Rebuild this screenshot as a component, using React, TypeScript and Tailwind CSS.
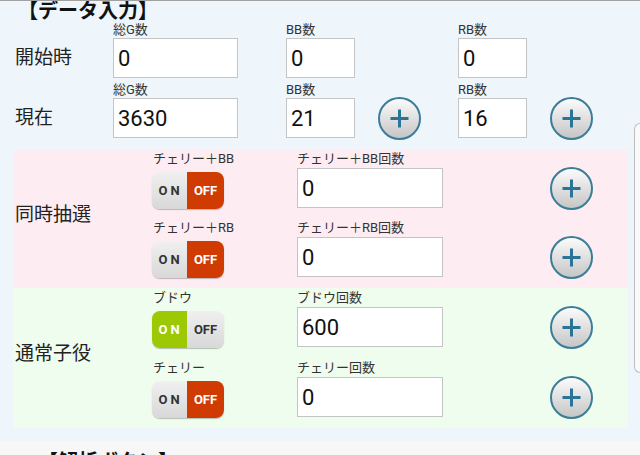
import React from "react";

const Plus = () => (
  <div className="flex h-[43px] w-[43px] items-center justify-center rounded-full border-2 border-[#3b7d98] bg-gradient-to-b from-[#fbfbfb] to-[#c6c6c6]">
    <svg width="19" height="19" viewBox="0 0 19 19">
      <path d="M9.5 0.5v18M0.5 9.5h18" stroke="#2a7597" strokeWidth="3" />
    </svg>
  </div>
);

const Field = ({ label, value, w }: { label: string; value: string; w: string }) => (
  <div className={`flex flex-col ${w}`}>
    <div className="h-[16px] text-[13px] leading-[16px] text-[#333]">{label}</div>
    <div className="flex h-[40px] items-center border border-[#c4c4c4] bg-white pl-[4px] text-[22px] text-[#111]">
      {value}
    </div>
  </div>
);

const Toggle = ({ on }: { on: boolean }) => (
  <div className="mt-[4px] flex h-[37px] w-[72px] overflow-hidden rounded-[8px] shadow-[0_1px_1px_rgba(0,0,0,0.25)]">
    <div
      className={`flex w-[35px] items-center justify-center pl-[2px] text-[13px] font-bold tracking-[3px] ${
        on ? "bg-[#9cc903] text-white" : "bg-gradient-to-b from-[#f0f0f0] to-[#d8d8d8] text-[#333]"
      }`}
    >
      ON
    </div>
    <div
      className={`flex w-[37px] items-center justify-center text-[13px] font-bold ${
        on ? "bg-gradient-to-b from-[#f0f0f0] to-[#d8d8d8] text-[#333]" : "bg-[#cf3b00] text-white"
      }`}
    >
      OFF
    </div>
  </div>
);

const SubRow = ({ tl, il, value, on, h }: { tl: string; il: string; value: string; on: boolean; h: string }) => (
  <div className={`flex ${h}`}>
    <div className="flex w-[145px] flex-col">
      <div className="h-[18px] pl-[1px] text-[13px] leading-[18px] text-[#333]">{tl}</div>
      <Toggle on={on} />
    </div>
    <div className="flex w-[146px] flex-col">
      <div className="h-[18px] text-[13px] leading-[18px] text-[#333]">{il}</div>
      <div className="flex h-[40px] items-center border border-[#c4c4c4] bg-white pl-[4px] text-[22px] text-[#111]">
        {value}
      </div>
    </div>
    <div className="ml-[107px] mt-[18px] flex h-[40px] items-center">
      <Plus />
    </div>
  </div>
);

export default function App() {
  return (
    <div className="relative h-[455px] w-[640px] overflow-hidden border-t border-[#a0a0a0] bg-[#eef6fc] font-['Roboto','Noto_Sans_CJK_JP',sans-serif] text-[#222]">
      <div className="h-[21px] pl-[18px] text-[20px] font-bold leading-[21px] text-[#111]">【データ入力】</div>

      <div className="flex h-[60px] items-start">
        <div className="mt-[16px] flex h-[40px] w-[113px] items-center pl-[15px] text-[19px]">開始時</div>
        <Field label="総G数" value="0" w="w-[125px]" />
        <div className="ml-[48px]" />
        <Field label="BB数" value="0" w="w-[69px]" />
        <div className="ml-[23px] w-[43px]" />
        <div className="ml-[37px]" />
        <Field label="RB数" value="0" w="w-[69px]" />
      </div>

      <div className="flex h-[60px] items-start">
        <div className="mt-[16px] flex h-[40px] w-[113px] items-center pl-[15px] text-[19px]">現在</div>
        <Field label="総G数" value="3630" w="w-[125px]" />
        <div className="ml-[48px]" />
        <Field label="BB数" value="21" w="w-[69px]" />
        <div className="ml-[23px] mt-[16px] flex h-[40px] items-center">
          <Plus />
        </div>
        <div className="ml-[37px]" />
        <Field label="RB数" value="16" w="w-[69px]" />
        <div className="ml-[23px] mt-[16px] flex h-[40px] items-center">
          <Plus />
        </div>
      </div>

      <div className="ml-[13px] mt-[8px] flex w-[615px] bg-[#fdedf2]">
        <div className="flex w-[139px] items-center pb-[8px] pl-[2px] text-[19px]">同時抽選</div>
        <div className="flex flex-col">
          <SubRow tl="チェリー＋BB" il="チェリー＋BB回数" value="0" on={false} h="h-[69px]" />
          <SubRow tl="チェリー＋RB" il="チェリー＋RB回数" value="0" on={false} h="h-[69px]" />
        </div>
      </div>

      <div className="ml-[13px] flex w-[615px] bg-[#effdef]">
        <div className="flex w-[139px] items-center pb-[8px] pl-[2px] text-[19px]">通常子役</div>
        <div className="flex flex-col pt-[1px]">
          <SubRow tl="ブドウ" il="ブドウ回数" value="600" on={true} h="h-[70px]" />
          <SubRow tl="チェリー" il="チェリー回数" value="0" on={false} h="h-[69px]" />
        </div>
      </div>

      <div className="mt-[13px] h-[40px] bg-[#f7f7f7] pl-[38px] pt-[11px] text-[20px] font-bold leading-[21px] text-[#111]">
        【解析ボタン】
      </div>

      <div className="absolute right-0 top-[122px] h-[250px] w-[6px] rounded-l-[6px] border-y border-l border-[#bdbdbd] bg-[#fafafa]" />
    </div>
  );
}
